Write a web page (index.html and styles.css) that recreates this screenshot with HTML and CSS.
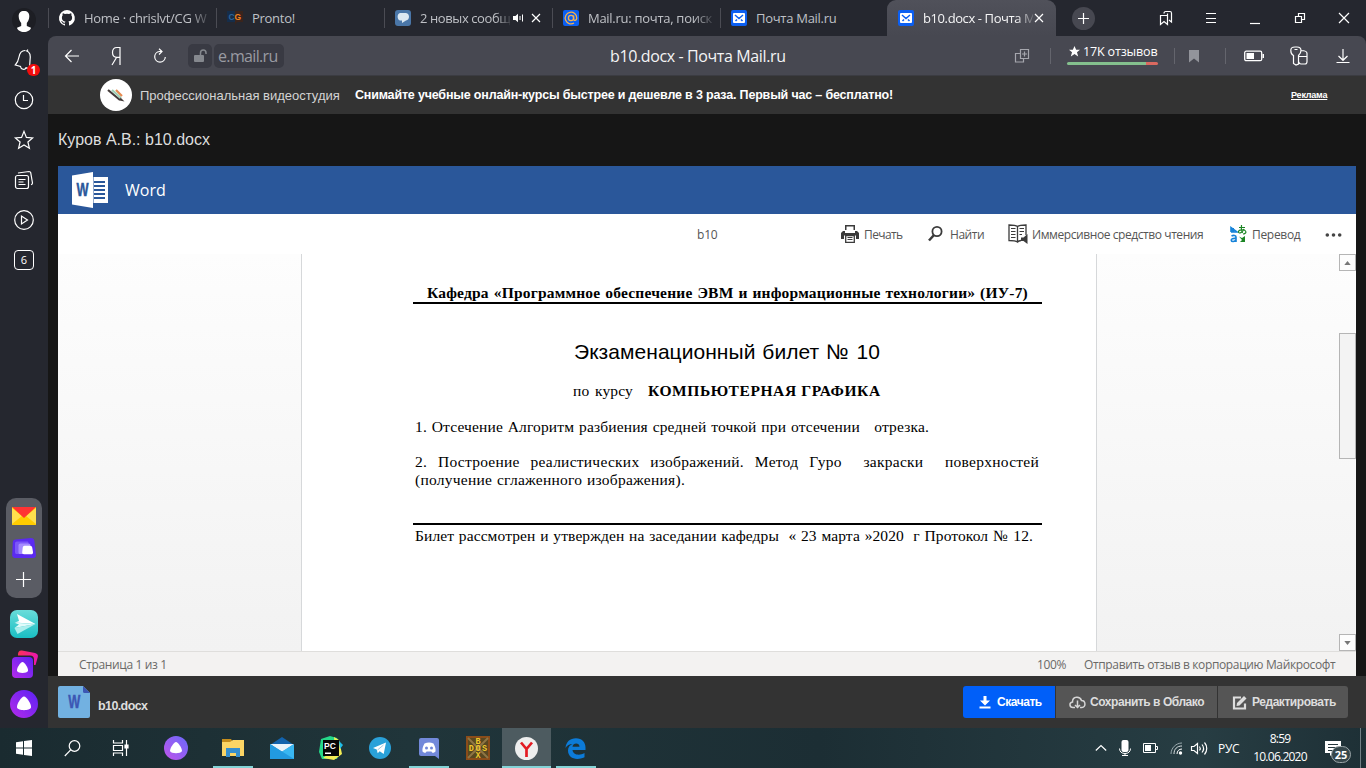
FILE: index.html
```html
<!DOCTYPE html>
<html lang="ru">
<head>
<meta charset="utf-8">
<title>b10.docx - Почта Mail.ru</title>
<link rel="stylesheet" href="styles.css">
</head>
<body>
<div class="browser">
  <aside class="sidebar">
    <div class="side-item"><svg width="24" height="24" viewBox="0 0 24 24"><circle cx="12" cy="12" r="12" fill="#1d1e24"/><path d="M12 3c3.500 0 5.500 2 5.300 5.500-.1 3-1.300 5-2.500 6.500v3l4.200 1.800C18.500 22.500 15.500 24 12 24s-6.500-1.500-7-4.200L9.200 18v-3C8 13.500 6.800 11.500 6.700 8.500 6.500 5 8.500 3 12 3z" fill="#fff"/></svg></div>
    <div class="side-item"><svg class="line" width="20" height="22" viewBox="0 0 20 22"><path d="M11.500 1.500C7 1.200 5.600 4.500 5 8c-.6 3.500-1.300 5.500-3.700 8l5.200 1.500c.3 3 4.500 4 5.500 1.300l4.500 1c-1.200-3.300-1-5.300-.5-8.300C16.600 7.500 16.500 3 12.700 2L14 .6"/></svg><b class="badge">1</b></div>
    <div class="side-item"><svg class="line" width="20" height="20" viewBox="0 0 20 20"><circle cx="10" cy="10" r="8.700"/><path d="M9.500 5v5.500H14"/></svg></div>
    <div class="side-item"><svg class="line" width="20" height="20" viewBox="0 0 20 20"><path d="M10 1.400l2.400 6 6.200.5-4.700 4.100 1.500 6.300L10 14.900l-5.400 3.400 1.500-6.300L1.400 7.900l6.200-.5z"/></svg></div>
    <div class="side-item"><svg class="line" width="20" height="20" viewBox="0 0 20 20"><rect x="1.500" y="5.500" width="13" height="13" rx="2"/><path d="M4.500 9.500h7M4.500 12h5M4.500 14.500h7M4 3l11-1.500c1 0 1.600.3 1.700 1.200L18.500 13c0 1-.5 1.500-1.500 1.800"/></svg></div>
    <div class="side-item"><svg class="line" width="20" height="20" viewBox="0 0 20 20"><circle cx="10" cy="10" r="9.300"/><path d="M7.500 6v8l6-4z"/></svg></div>
    <div class="side-item"><span class="tab-count">6</span></div>
    <div class="side-group">
      <svg width="24" height="18" viewBox="0 0 24 18"><path fill="#ffcc00" d="M0 0h24v18H0z"/><path fill="#ffe04d" d="M0 1l10 8L0 17zM24 1L14 9l10 8z"/><path fill="#ff3333" d="M0 0h24L12 11z"/></svg>
      <svg width="24" height="20" viewBox="0 0 24 20"><path fill="#5b2bf0" d="M3.500 1.500L19 0c2 0 3 1 3.300 2.500L24 17c0 2-1 3-3 3H4c-2 0-3.500-.5-3.800-2.500L.8 4c.2-1.500 1-2.300 2.700-2.500z"/><path fill="#7b57f8" d="M5 3.500h10c1 0 1.500.5 1.500 1.500v11H5c-1.500 0-2-.5-2-2V5.500c0-1.200.8-2 2-2z"/><path fill="#a58cff" d="M8.500 5.500h8c1.200 0 2 .7 2 2V16H8c-1.200 0-1.500-.5-1.500-2V7.500c0-1.200.8-2 2-2z"/><path fill="#fff" d="M12.500 7.800h5.500c1.300 0 2 .7 2.200 1.700l.8 4.500c.2 1.500-.5 2.300-2 2.300h-7c-1.300 0-2-.8-1.800-2l.5-4.500c.2-1.300.8-2 1.800-2z"/></svg>
      <svg class="line" width="16" height="16" viewBox="0 0 16 16"><path d="M7.500 1v15M0 8.500h15"/></svg>
    </div>
    <div class="side-apps">
      <svg width="28" height="28" viewBox="0 0 28 28"><defs><linearGradient id="teal" x2="0" y2="1"><stop stop-color="#69ddda"/><stop offset="1" stop-color="#19bec3"/></linearGradient></defs><rect width="28" height="28" rx="7" fill="url(#teal)"/><path fill="#fff" d="M7 4l18.500 10L5 12.500 9 11z"/><path fill="#e0fbfa" d="M25.500 14L4.500 12.700 9 14.500 4.500 18z"/><path fill="#aeeeed" d="M25.500 14L4.500 18l3 6z"/></svg>
      <svg width="28" height="28" viewBox="0 0 28 28"><defs><linearGradient id="pur" x1="1" x2="0" y2="1"><stop stop-color="#5a22f5"/><stop offset="1" stop-color="#b52be9"/></linearGradient><linearGradient id="pink"><stop stop-color="#fb3158"/><stop offset="1" stop-color="#ea16b0"/></linearGradient></defs><path d="M8 4c.3-2.500 1.500-4 4-3.500L25 3c2.500.7 3.300 2 2.800 4L25.500 15H20V7H8z" fill="url(#pink)"/><rect x="0" y="5.500" width="24" height="22.500" rx="4" fill="#25272f"/><rect x="2" y="7" width="21" height="21" rx="4" fill="url(#pur)"/><path fill="#fff" d="M12.500 12c2 0 6 6 5.500 9-1 2.500-10 2.500-11 0-.5-3 3.500-9 5.500-9z"/></svg>
      <svg width="28" height="28" viewBox="0 0 28 28"><circle cx="14" cy="14" r="14" fill="url(#pur)"/><path fill="#fff" d="M14 6.500c2.500 0 7.500 7.500 7 11-1 3.500-13 3.500-14 0-.5-3.500 4.500-11 7-11z"/></svg>
    </div>
  </aside>

  <div class="main">
    <nav class="tabs">
      <div class="tab">
        <svg class="fav" viewBox="0 0 16 16"><path fill="#fff" d="M8 0a8 8 0 0 0-2.500 15.600c.4.100.5-.2.500-.4v-1.500c-2.200.5-2.700-1-2.700-1-.4-.9-.9-1.200-.9-1.200-.7-.5.1-.5.100-.5.800.1 1.200.8 1.200.8.700 1.300 1.900.9 2.300.7.100-.5.300-.9.500-1.100-1.800-.2-3.600-.9-3.600-4 0-.9.300-1.600.8-2.100-.1-.2-.4-1 .1-2.100 0 0 .7-.2 2.200.8a7.500 7.500 0 0 1 4 0c1.500-1 2.200-.8 2.200-.8.400 1.100.2 1.900.1 2.100.5.600.8 1.300.8 2.100 0 3.100-1.900 3.700-3.700 4 .3.200.6.700.6 1.500v2.200c0 .2.100.5.600.4A8 8 0 0 0 8 0z"/></svg>
        <span class="tab-title t1">Home · chrislvt/CG W</span>
      </div>
      <div class="tab">
        <svg class="fav" viewBox="0 0 16 16"><path fill="#152d4a" d="M0 1h8v11H0z"/><path fill="#3a241c" d="M8 1h8v11H10l-2 3z"/><text x="1.500" y="10" class="cg" fill="#2d649b">C</text><text x="7.500" y="10" class="cg" fill="#f18323">G</text></svg>
        <span class="tab-title t2">Pronto!</span>
      </div>
      <div class="tab">
        <svg class="fav" viewBox="0 0 16 16"><rect width="16" height="16" rx="3" fill="#4a76a8"/><path fill="#dce8f2" d="M5 3h6c4 .5 4 7 0 7.500L7 13v-2.500H5C1.700 9.500 2 3.500 5 3z"/></svg>
        <span class="tab-title t3">2 новых сообщ</span>
        <svg class="sound" viewBox="0 0 10 10"><path fill="#fff" d="M0 3h2.500L5 .8v8.400L2.500 7H0z"/><path stroke="#fff" d="M7 3v4M9.500 1.500v7"/></svg>
        <svg class="line tab-x" viewBox="0 0 10 10"><path d="M1 1l8 8M9 1L1 9"/></svg>
      </div>
      <div class="tab">
        <svg class="fav" viewBox="0 0 16 16"><rect width="16" height="16" rx="2" fill="#0b5ff2"/><g fill="none" stroke="#f8b24b" stroke-width="1.300"><circle cx="8" cy="8" r="2.600"/><path d="M10.600 5.400v3.800c.2 1.800 3.200 1.500 3.200-1.200A5.800 5.800 0 1 0 11 13"/></g></svg>
        <span class="tab-title t4">Mail.ru: почта, поиск</span>
      </div>
      <div class="tab">
        <svg class="fav" viewBox="0 0 16 16"><rect width="16" height="16" rx="2" fill="#0b5ff2"/><rect x="2" y="3" width="12" height="10" rx="1" fill="#fff"/><path d="M4 5l4 3.500L12 5M4.500 11L6 9.500M11.500 11L10 9.500" stroke="#0b5ff2" stroke-width="1.500" fill="none"/></svg>
        <span class="tab-title t5">Почта Mail.ru</span>
      </div>
      <div class="tab active">
        <svg class="fav" viewBox="0 0 16 16"><rect width="16" height="16" rx="2" fill="#0b5ff2"/><rect x="2" y="3" width="12" height="10" rx="1" fill="#fff"/><path d="M4 5l4 3.500L12 5M4.500 11L6 9.500M11.500 11L10 9.500" stroke="#0b5ff2" stroke-width="1.500" fill="none"/></svg>
        <span class="tab-title t6">b10.docx - Почта М</span>
        <svg class="line tab-x" viewBox="0 0 10 10"><path d="M1 1l8 8M9 1L1 9"/></svg>
      </div>
      <span class="new-tab"><svg class="line" width="11" height="11" viewBox="0 0 11 11"><path d="M5.500 0v11M0 5.500h11"/></svg></span>
      <div class="win">
        <svg class="line" viewBox="0 0 16 16"><path d="M2.500 5.500h7v9L6 11.500l-3.500 3zM6 3.500c0-1.200.5-2 1.800-2H12c1.200 0 1.500.7 1.500 1.800V12L11 10M9.500 3.500v2"/></svg>
        <svg class="line" viewBox="0 0 16 16"><path d="M3 3.500h10M3 8.500h10M3 12.500h10"/></svg>
        <svg class="line" viewBox="0 0 16 16"><path d="M3 13.500h10"/></svg>
        <svg class="line" viewBox="0 0 16 16"><path d="M3.500 6.500h6v6h-6zM6.500 6V3.500h6v6H10"/></svg>
        <svg class="line" viewBox="0 0 16 16"><path d="M3 3l10 10M13 3L3 13"/></svg>
      </div>
    </nav>

    <div class="toolbar">
      <div class="nav-left">
        <svg class="line" width="16" height="16" viewBox="0 0 16 16"><path d="M7.500 2L1.500 8l6 6M1.500 8H15"/></svg>
        <svg class="line ya" width="12" height="20" viewBox="0 0 12 20"><path d="M10 19V1.500H7C3.800 1.500 2.500 3.500 2.500 6.500s1.500 4.800 4.500 4.800h3M6.500 11.500L2 19"/></svg>
        <svg class="line" width="14" height="16" viewBox="0 0 14 16"><path d="M8.500 3.500H6.500A5.300 5.300 0 1 0 12.300 9M6 .8l3 2.700-3 3"/></svg>
      </div>
      <span class="lock"><svg width="16" height="16" viewBox="0 0 16 16"><rect x="2" y="7" width="10" height="7" rx="1" fill="#85888e"/><path d="M8.500 7V5c0-4 5.500-4 5.500 0v1" fill="none" stroke="#85888e" stroke-width="1.500"/></svg></span>
      <span class="host">e.mail.ru</span>
      <span class="page-title">b10.docx - Почта Mail.ru</span>
      <div class="nav-right">
        <svg class="line dim i-dup" width="16" height="16" viewBox="0 0 16 16"><path d="M6.500 1.500h8v9h-8zM6 5.500H1.500v8.500h8V11M10.500 3.500v5M8 6h5"/></svg>
        <i class="sep"></i>
        <div class="reviews"><span><svg width="11" height="11" viewBox="0 0 12 12"><path fill="#fff" d="M6 0l1.800 4H12L8.700 6.800 10 11.500 6 8.800l-4 2.700 1.300-4.700L0 4h4.200z"/></svg><em>17K отзывов</em></span><i class="rating"></i></div>
        <i class="sep"></i>
        <svg class="i-mark" width="10" height="14" viewBox="0 0 10 14"><path fill="#92949b" d="M0 1h10v12.500L5 9.500l-5 4z"/></svg>
        <i class="sep"></i>
        <svg class="i-bat" width="20" height="12" viewBox="0 0 20 12"><rect x=".7" y="1.200" width="17" height="9.500" rx="1.500" fill="none" stroke="#fff" stroke-width="1.300"/><path fill="#fff" d="M2.500 3h7.500v6H2.500zM18.500 4H20v4h-1.500z"/></svg>
        <svg class="line i-key" width="19" height="20" viewBox="0 0 19 20"><path d="M3.500 9.500C1 8.500.8 6 .8 4.500.8 1.500 2.500 1 5 1h2c2.500 0 4 1 4 3.500S9.500 8.500 8.500 9.500V18L6 19l-2.500-1.500zM4.500 3.500h3M11 4.500c3 0 6 0 6 3v8c0 1.500-.5 2.500-2 2.500h-4c-1.500 0-2-1-2.300-2M9 10.500h8"/></svg>
        <svg class="line i-dl" width="14" height="16" viewBox="0 0 14 16"><path d="M7 1v11M2.500 8L7 12.300 11.500 8M.5 14.500h13"/></svg>
      </div>
    </div>

    <div class="ad">
      <svg width="32" height="32" viewBox="0 0 32 32"><circle cx="16" cy="16" r="16" fill="#fff"/><g stroke-width="2.200"><path stroke="#443b39" d="M8 11l12 10"/><path stroke="#9fd0b6" d="M12 11l9 8"/><path stroke="#e68a51" d="M16 11l6 6"/></g><path fill="#443b39" d="M20.500 18.500l4 4-5-1z"/></svg>
      <span class="ad-brand">Профессиональная видеостудия</span>
      <b class="ad-text">Снимайте учебные онлайн-курсы быстрее и дешевле в 3 раза. Первый час – бесплатно!</b>
      <span class="ad-mark">Реклама</span>
    </div>

    <div class="heading"><span>Куров А.В.: b10.docx</span></div>

    <section class="viewer">
      <header class="word-bar">
        <svg width="36" height="36" viewBox="0 0 36 36"><path fill="#fff" d="M0 3.500L21 0v36L0 32.500zM21.500 5H36v26H21.500z"/><path stroke="#2a579a" stroke-width="2" d="M22 10h11M22 14h11M22 18h11M22 22h11M22 26h11"/><text class="w-mark" transform="translate(10.500 24) scale(.8 1.100)" fill="#2a579a" stroke="#2a579a">W</text></svg>
        <span>Word</span>
      </header>
      <div class="commands">
        <span class="doc-name">b10</span>
        <div class="cmd c-print"><svg width="18" height="18" viewBox="0 0 18 18"><path fill="#3b3b3b" d="M4 0h10v5h-1.500V1.500h-7V5H4zM2 6h2v2h10V6h2l2 2v6h-3v-3.500H3V14H0V8z"/><path fill="none" stroke="#3b3b3b" stroke-width="1.300" d="M4.700 10.500h8.600v6.800H4.700z"/><path stroke="#3b3b3b" d="M6.500 12.500h5M6.500 14.500h5"/></svg><span>Печать</span></div>
        <div class="cmd c-find"><svg width="15" height="16" viewBox="0 0 15 16"><circle cx="9" cy="5.500" r="4.600" fill="none" stroke="#3b3b3b" stroke-width="1.800"/><path d="M6 9L1 14.500" stroke="#3b3b3b" stroke-width="2.500"/></svg><span>Найти</span></div>
        <div class="cmd c-read"><svg width="20" height="20" viewBox="0 0 20 20"><path fill="none" stroke="#3b3b3b" stroke-width="1.300" d="M9.500 2.500C7.500 1 4 1 1 1v15.500c3 0 6.500 0 8.500 1.500V2.500C11.500 1 14 1 18 1v10M9.500 18c1-1 2-1.300 3.500-1.500"/><path stroke="#3b3b3b" d="M3 4.500h4.500M3 7.500h4.500M3 10.500h4.500M3 13.500h4.500M11.500 4.500H16M11.500 7.500H16M11.500 10.500H14"/><path fill="#3b3b3b" d="M13 13.500h2.500L19.500 10v10L15.500 17H13z"/></svg><span>Иммерсивное средство чтения</span></div>
        <div class="cmd c-trans"><svg width="17" height="18" viewBox="0 0 17 18"><path fill="none" stroke="#1683d9" stroke-width="1.600" d="M1 7V2.500l6 4.500H1M1.500 11c2-1 4.500-.7 4.500 1v5M6 13.500c-3-.3-5 .2-4.700 2 .3 1.600 3.600 1.300 4.700-.5"/><path fill="#1683d9" d="M1 3h3v4H1z"/><path fill="none" stroke="#1c8524" stroke-width="1.200" d="M9 2.500h6M11.500 0c-.5 3 0 6 1 8M14 4c-1 3-5 5.500-5.500 3S14 4 15.500 6 14 9 13 9"/><path fill="#1c8524" d="M9 11.500l3 1.500 3-2v6h-5l2-2z"/></svg><span>Перевод</span></div>
        <svg class="dots" width="17" height="5" viewBox="0 0 17 5"><g fill="#444"><circle cx="2.300" cy="3" r="1.800"/><circle cx="8.500" cy="3" r="1.800"/><circle cx="14.700" cy="3" r="1.800"/></g></svg>
      </div>

      <div class="canvas">
        <article class="page">
          <p class="dept">Кафедра «Программное обеспечение ЭВМ и информационные технологии» (ИУ-7)</p>
          <h1>Экзаменационный билет № 10</h1>
          <p class="course"><span>по курсу</span><b>КОМПЬЮТЕРНАЯ ГРАФИКА</b></p>
          <p class="q1">1. Отсечение Алгоритм разбиения средней точкой при отсечении &nbsp; отрезка.</p>
          <p class="q2">2. Построение реалистических изображений. Метод Гуро &nbsp;закраски &nbsp;поверхностей</p>
          <p class="q3">(получение сглаженного изображения).</p>
          <p class="approved">Билет рассмотрен и утвержден на заседании кафедры &nbsp;« 23 марта »2020 &nbsp;г Протокол № 12.</p>
        </article>
        <div class="scroll">
          <span class="sbtn"><svg width="7" height="4" viewBox="0 0 8 5"><path fill="#777" d="M4 0l4 5H0z"/></svg></span>
          <span class="thumb"></span>
          <span class="sbtn"><svg width="7" height="4" viewBox="0 0 8 5"><path fill="#777" d="M0 0h8L4 5z"/></svg></span>
        </div>
      </div>

      <footer class="status"><span class="pages">Страница 1 из 1</span><span class="zoom">100%</span><span class="feedback">Отправить отзыв в корпорацию Майкрософт</span></footer>
    </section>

    <div class="file-bar">
      <svg width="32" height="32" viewBox="0 0 32 32"><path fill="#72b1e1" d="M2 0h23l7 7v23a2 2 0 0 1-2 2H2a2 2 0 0 1-2-2V2a2 2 0 0 1 2-2z"/><path fill="#3c57b4" d="M25 0l7 7h-5.500A1.500 1.500 0 0 1 25 5.500z"/><text class="w-mark" transform="translate(16 22) scale(.8 1.100)" fill="#3c57b4" stroke="#3c57b4">W</text></svg>
      <b class="file-name">b10.docx</b>
      <div class="actions">
        <span class="act primary"><svg width="12" height="14" viewBox="0 0 12 14"><path fill="#fff" d="M4.500 1h3v4.500H11l-5 5L1 5.500h3.500zM.500 11.500h11V13.500H.5z"/></svg><b>Скачать</b></span>
        <span class="act save"><svg width="17" height="14" viewBox="0 0 17 14"><path fill="none" stroke="#d5d5d5" stroke-width="1.500" d="M6 12.500H4C.3 12.500-.2 7.500 3.500 7 3.500 1 11 1 12.500 5.500c4.500 0 4.500 7 .5 7h-2M8.500 5.500v7M6 10l2.500 2.500L11 10"/></svg><b>Сохранить в Облако</b></span>
        <span class="act edit"><svg width="15" height="15" viewBox="0 0 15 15"><path fill="none" stroke="#ddd" stroke-width="2.200" d="M9 2.500H2v11h11V8.500"/><path fill="#ddd" d="M5 8L12 1l2.500 2.500-7 7-3 .5z"/></svg><b>Редактировать</b></span>
      </div>
    </div>
  </div>
</div>

<div class="taskbar">
  <span class="tb"><svg width="16" height="16" viewBox="0 0 16 16"><path fill="#fff" d="M0 2.200l7-1v6.300H0zM8 1l8-1v7.500H8zM0 8.500h7v6.300l-7-1zM8 8.500h8V16l-8-1z"/></svg></span>
  <span class="tb"><svg class="line" width="17" height="17" viewBox="0 0 17 17"><circle cx="10.500" cy="6" r="5.300"/><path d="M6.700 9.800L.8 16"/></svg></span>
  <span class="tb"><svg class="line" width="17" height="16" viewBox="0 0 17 16"><path d="M1.500 0v3h9V0M1.500 16v-3h9v3M1.500 5.500h9v5h-9zM14.500 0v16"/><path fill="#fff" d="M13 5h3v3h-3z"/></svg></span>
  <span class="tb wide"><svg width="24" height="24" viewBox="0 0 24 24"><defs><linearGradient id="al" x1="1" x2="0" y2="1"><stop stop-color="#6869fb"/><stop offset="1" stop-color="#c154ea"/></linearGradient></defs><circle cx="12" cy="12" r="12" fill="url(#al)"/><path fill="#fff" d="M12 6c2 0 6 6 6 9-1 3-11 3-12 0 0-3 4-9 6-9z"/></svg></span>
  <span class="tb app run"><svg width="22" height="20" viewBox="0 0 22 20"><path fill="#c58d1c" d="M0 1h9l2 3v4H0z"/><path fill="#fbd565" d="M0 4h8l3-2h11v16H0z"/><path fill="#368fce" d="M4 19v-9h14v9h-4v-4H8v4z"/></svg></span>
  <span class="tb app"><svg width="24" height="22" viewBox="0 0 24 22"><path fill="#1263ad" d="M0 8l12-8 12 8v5H0z"/><path fill="#e8f3fb" d="M0 7h24L12 15z"/><path fill="#39b7f2" d="M0 7l12 8L0 22zM24 7v15H0z"/><path fill="#229ae0" d="M0 7l24 15H0z"/></svg></span>
  <span class="tb app"><svg width="24" height="24" viewBox="0 0 24 24"><path fill="#25d889" d="M2 3l9-3 7 2 4 7-4 14H3L0 16z"/><path fill="#f3ed55" d="M15 1l5 3 3 14-8 6-11-2 12-9z"/><path fill="#20bde6" d="M20 5l4 4-3 4z"/><path fill="#060606" d="M4 4h16v16H4z"/><text class="pc" x="5" y="12.500">PC</text><path fill="#fff" d="M6 16.500h6V18H6z"/></svg></span>
  <span class="tb app"><svg width="22" height="22" viewBox="0 0 22 22"><circle cx="11" cy="11" r="11" fill="#2aa1d9"/><path fill="#fff" d="M4 11l13-5.500-2.300 11.500-4-2.800-2 2-1-3.700z"/><path stroke="#a7cbe0" d="M8.500 13l6-5"/></svg></span>
  <span class="tb app run"><svg width="20" height="21" viewBox="0 0 20 21"><path fill="#7289da" d="M2 0h16a2 2 0 0 1 2 2v19l-4-3H2a2 2 0 0 1-2-2V2a2 2 0 0 1 2-2z"/><path fill="#fff" d="M5.500 5.500Q10 3.500 14.500 5.500C16.500 9 16.800 11 16.500 13.500 14.500 15.500 13 15 12.500 13.500h-5C7 15 5.500 15.500 3.500 13.500 3.200 11 3.500 9 5.500 5.500z"/><g fill="#7289da"><circle cx="7.500" cy="10" r="1.500"/><circle cx="12.500" cy="10" r="1.500"/></g></svg></span>
  <span class="tb app"><svg width="24" height="24" viewBox="0 0 24 24"><path fill="#8b4c19" d="M0 0h24v24H0z"/><path fill="#594821" d="M2 2h20v20H2z"/><path stroke="#8f7544" stroke-width="2" d="M2 2l20 20M22 2L2 22"/><g class="dos"><text x="12.700" y="7.500">B</text><text x="12.700" y="14.500">DOS</text><text x="12.700" y="21.500">X</text></g></svg></span>
  <span class="tb app run cur"><svg width="23" height="23" viewBox="0 0 23 23"><circle cx="11.500" cy="11.500" r="11.500" fill="#eee"/><path fill="none" stroke="#e31b23" stroke-width="2.700" d="M6 5.500l5.500 6.500L17 5.500M11.500 12v8"/></svg></span>
  <span class="tb app run"><svg width="21" height="21" viewBox="0 0 21 21"><path fill="#0c7bd8" d="M.5 10C1 4 5 .3 11 .3c6 0 9.500 4.200 9.500 9.200V12H7.500c.5 5 7 6 12 3v4.300C11 23 3 20 3 12.500 3 9 5 7 7.500 6 4.500 6 2 7.500.5 10zM7.500 8.800h7C14.500 4.500 8 4.500 7.500 8.800z"/></svg></span>
  <div class="tray">
    <svg class="line" width="12" height="8" viewBox="0 0 12 8"><path d="M.8 6.500L6 1.500l5.200 5"/></svg>
    <svg width="12" height="16" viewBox="0 0 12 16"><rect x="2.500" width="7" height="12" rx="2" fill="#fff"/><path fill="none" stroke="#fff" d="M.5 8.500c0 3 2 5 5.500 5s5.500-2 5.500-5M6 13v2.500M3 15.500h6"/></svg>
    <svg width="15" height="10" viewBox="0 0 15 10"><path fill="none" stroke="#fff" d="M.5.5h12v9H.5zM13 3.500h1.500v3H13"/><path fill="#fff" d="M2 2h6v6H2z"/></svg>
    <svg class="wifi" width="13" height="13" viewBox="0 0 13 13"><g fill="none" stroke="#9cabb0"><path d="M1 12C1 6 6 1 12 1"/><path d="M4 12c0-5 3-8 8-8" stroke="#dce2e4"/><path d="M7 12c0-3 2-5 5-5" stroke="#fff"/></g><circle cx="10.500" cy="11" r="1.700" fill="#fff"/></svg>
    <svg class="line" width="17" height="13" viewBox="0 0 17 13"><path d="M.5 4.500H3l3.500-3v10L3 8.500H.5zM8.500 4.500c1 1.300 1 2.700 0 4M11 2.500c2 2.500 2 5.500 0 8M13.500.5c3 3.500 3 8.500 0 12"/></svg>
    <span class="lang">РУС</span>
    <div class="clock"><span class="time">8:59</span><span class="date">10.06.2020</span></div>
    <div class="notes"><svg width="16" height="15" viewBox="0 0 16 15"><path fill="#fff" d="M0 0h16v12H8l-3 3v-3H0z"/><path stroke="#26373d" d="M3 3.500h10M3 6.500h10M3 9.500h6"/></svg><b>25</b></div>
    <i class="show"></i>
  </div>
</div>
</body>
</html>
```

FILE: styles.css
```css
* { box-sizing: border-box; }
body { margin: 0; width: 1366px; height: 768px; overflow: hidden; background: #161616; font-family: "Open Sans", "Noto Sans", sans-serif; }
svg { display: block; flex: none; overflow: visible; }
span, b, em, p, h1 { white-space: nowrap; }
p, h1 { margin: 0; }
.line { fill: none; stroke: #fff; stroke-width: 1.2; }
.browser { display: flex; height: 728px; background: #25272f; }

/* sidebar */
.sidebar { width: 48px; display: flex; flex-direction: column; align-items: center; }
.side-item { position: relative; width: 48px; height: 40px; display: flex; align-items: center; justify-content: center; }
.badge { position: absolute; left: 27px; top: 24px; width: 13px; height: 12px; border-radius: 6px; background: #f20d0d; color: #fff; font-size: 10px; line-height: 12px; text-align: center; }
.tab-count { width: 20px; height: 20px; border: 1.3px solid #fff; border-radius: 4px; color: #fff; font-size: 11px; line-height: 18px; text-align: center; }
.side-group { width: 36px; height: 100px; margin-top: 218px; padding-top: 9px; border-radius: 10px; background: #5a5c64; display: flex; flex-direction: column; align-items: center; gap: 13px; }
.side-apps { margin-top: 12px; display: flex; flex-direction: column; gap: 12px; }

/* tabs */
.main { flex: 1; display: flex; flex-direction: column; min-width: 0; background: #161616; }
.tabs { position: relative; z-index: 1; height: 36px; display: flex; align-items: center; background: #25272f; }
.tab { width: 168px; height: 36px; padding-left: 10px; display: flex; align-items: center; color: #bfc1c6; }
.tab::before { content: ""; width: 1px; height: 20px; margin-left: -10px; margin-right: 10px; background: #4b4c54; }
.fav { width: 16px; height: 16px; margin-right: 9px; }
.tab-title { width: 124px; overflow: hidden; font-size: 13px; line-height: 20px; letter-spacing: -.28px; }
.t1, .t3, .t4, .t6 { -webkit-mask-image: linear-gradient(to right, #000 85%, rgba(0,0,0,.2)); mask-image: linear-gradient(to right, #000 85%, rgba(0,0,0,.2)); }
.t3 { width: 90px; margin-right: 3px; letter-spacing: -.4px; }
.t6 { width: 110px; margin-right: 1px; color: #f4f4f5; letter-spacing: -.4px; }
.sound { width: 10px; height: 10px; margin-right: 8px; }
.tab-x { width: 10px; height: 10px; }
.active { width: 169px; margin-left: -1px; background: linear-gradient(#50515a, #474851); border-radius: 9px 9px 0 0; }
.active::before { background: none; }
.new-tab { width: 23px; height: 23px; margin-left: 16px; border-radius: 50%; background: #474851; display: flex; align-items: center; justify-content: center; }
.win { margin-left: 63px; display: flex; gap: 28.5px; }
.win svg { width: 16px; height: 16px; }
.cg { font: bold 8.5px "Liberation Sans", sans-serif; }

/* address bar */
.toolbar { height: 40px; display: flex; align-items: center; background: #474851; border-bottom: 1px solid #3b3c42; border-radius: 8px 8px 0 0; box-shadow: 0 -8px 0 0 #25272f; }
.nav-left { width: 140px; padding-left: 16px; display: flex; align-items: center; }
.nav-left .ya { margin: 0 31px 0 30px; }
.lock, .host { height: 24px; border-radius: 5px; background: #393a43; display: flex; align-items: center; }
.lock { width: 24px; justify-content: center; margin-right: 2px; }
.host { width: 70px; padding-left: 4px; color: #999ba2; font-size: 16px; letter-spacing: -.65px; }
.page-title { width: 190px; margin-left: 326px; padding-top: 1px; color: #f4f4f5; font-size: 16px; letter-spacing: -.38px; }
.nav-right { flex: 1; padding-left: 213.500px; display: flex; align-items: center; }
.dim { stroke: #a5a6ad; }
.sep { width: 1px; height: 16px; background: #64656d; }
.i-dup { margin-right: 20px; }
.reviews { width: 91px; height: 22px; margin: 0 15.500px 0 16.500px; }
.reviews span { display: flex; height: 14px; align-items: center; color: #fff; padding-left: 2px; gap: 3px; margin-top: 0; }
.reviews em { font-style: normal; font-size: 12.5px; letter-spacing: -.15px; }
.rating { display: block; height: 3px; margin-top: 3px; border-radius: 2px; background: linear-gradient(to right, #84c08e 87%, #da6960 87%); }
.i-mark { margin: 0 26px 0 14px; }
.i-bat { margin: 0 26px 0 18px; }
.i-dl { margin-left: 27px; }

/* ad and heading */
.ad { height: 38px; padding-left: 52px; display: flex; align-items: center; background: #333; color: #fff; font-family: "Liberation Sans", Arial, sans-serif; font-size: 13px; }
.ad-brand { width: 223px; padding-left: 8px; color: #d4d4d4; letter-spacing: 0; }
.ad-text { width: 936px; font-size: 12.5px; letter-spacing: -.18px; }
.ad-mark { font-size: 9px; font-weight: bold; text-decoration: underline; letter-spacing: -.2px; }
.heading { height: 52px; padding-left: 10px; display: flex; align-items: center; color: #ddd; font: 16px "Liberation Sans", Arial, sans-serif; }

/* document viewer */
.viewer { width: 1298px; height: 510px; margin-left: 10px; background: #fff; }
.word-bar { height: 48px; padding-left: 14px; display: flex; align-items: center; gap: 17px; background: #2a579a; color: #fff; font-size: 16px; }
.w-mark { font: bold 16px "Liberation Sans", Arial, sans-serif; text-anchor: middle; stroke-width: .4; }
.commands { height: 40px; padding-left: 639px; display: flex; align-items: center; color: #555; font-size: 12px; letter-spacing: -.42px; }
.doc-name { width: 144px; letter-spacing: -.2px; }
.cmd { display: flex; align-items: center; gap: 5px; }
.c-print { width: 87px; letter-spacing: -.6px; }
.c-find { width: 80px; gap: 7px; letter-spacing: -.45px; }
.c-read { width: 222px; gap: 4px; }
.c-trans { width: 95px; letter-spacing: -.3px; }
.canvas { height: 397px; display: flex; justify-content: space-between; padding-left: 243px; background: linear-gradient(#fdfdfd, #f2f2f2); }
.page { width: 796px; padding: 29px 54px 0 111px; background: #fff; border: solid #d6d8da; border-width: 0 1px; color: #000; font: 15.500px/18px "Liberation Serif", "Times New Roman", serif; }
.page p, .page h1 { text-align: justify; text-align-last: justify; }
.dept { height: 21px; padding: 1px 14px 0; border-bottom: 2px solid #000; font-weight: bold; letter-spacing: .2px; }
.page h1 { width: 306px; margin: 36px 0 0 161px; font: 21px/24px "Liberation Sans", Arial, sans-serif; letter-spacing: .05px; }
.page .course { margin: 18px 0 0 160px; display: flex; }
.course span { width: 60px; margin-right: 15px; letter-spacing: .15px; }
.course b { width: 232px; letter-spacing: .6px; }
.q1, .q2, .q3 { margin-left: 2px; }
.q1 { width: 514px; margin-top: 18px; letter-spacing: .15px; }
.q2 { width: 624px; margin-top: 17px; letter-spacing: .25px; }
.q3 { width: 270px; letter-spacing: .25px; }
.approved { margin-top: 34px; padding: 2px 9px 0 2px; border-top: 2px solid #000; letter-spacing: .1px; }
.scroll { width: 17px; display: flex; flex-direction: column; }
.sbtn { height: 17px; border: 1px solid #b5b5b5; background: #fdfdfd; display: flex; align-items: center; justify-content: center; }
.thumb { height: 126px; margin: 62px 0 175px; border: 1px solid #b5b5b5; background: #f3f3f3; }
.status { height: 25px; padding-left: 21px; display: flex; align-items: center; background: #f3f2f1; border-top: 1px solid #dfdedc; color: #6a6967; font-size: 12px; letter-spacing: -.36px; }
.pages { width: 958px; }
.zoom { width: 47px; }

/* file bar */
.file-bar { height: 52px; padding: 0 18px 0 10px; display: flex; align-items: center; background: #333; font-family: "Liberation Sans", Arial, sans-serif; color: #ddd; font-size: 12px; letter-spacing: -.45px; }
.file-name { margin: 7px 0 0 8px; font-size: 12.5px; letter-spacing: -.6px; }
.actions { margin-left: auto; height: 32px; display: flex; gap: 1px; }
.act { display: flex; align-items: center; background: #555; color: #ddd; gap: 6px; padding-left: 13px; }
.primary { width: 92px; background: #005ff9; color: #fff; border-radius: 3px 0 0 3px; padding-left: 16px; }
.save { width: 161px; gap: 4px; }
.edit { width: 130px; border-radius: 0 3px 3px 0; padding-left: 14px; gap: 5px; }

/* taskbar */
.taskbar { height: 40px; display: flex; background: linear-gradient(90deg, #1a2b30, #20353a 30%, #1c2e34 60%, #273d43 88%, #1e3036); color: #fff; }
.tb { width: 48px; height: 40px; display: flex; align-items: center; justify-content: center; position: relative; }
.wide { width: 64px; }
.app { width: 49px; }
.run::after { content: ""; position: absolute; bottom: 0; width: 40px; height: 2px; background: #83d3d6; }
.cur { background: #4d5b60; }
.cur::after { width: 49px; }
.pc { font: bold 8.5px "Liberation Sans", Arial, sans-serif; fill: #fff; }
.dos { font: bold 8.5px "Liberation Mono", monospace; fill: #efc72c; text-anchor: middle; letter-spacing: 1.5px; }
.tray { flex: 1; display: flex; align-items: center; justify-content: flex-end; font-size: 12px; }
.tray > svg { margin-right: 12px; }
.tray > .wifi { margin-right: 8px; }
.lang { width: 30px; margin-left: -2px; letter-spacing: -.3px; }
.clock { width: 64px; display: flex; flex-direction: column; align-items: center; line-height: 18px; letter-spacing: -.75px; }
.notes { position: relative; width: 35px; margin-left: 13px; }
.notes b { position: absolute; left: 6px; top: 5px; width: 20px; height: 17px; border: 1px solid #9aa5a8; border-radius: 9px; background: #35464b; font-size: 11px; line-height: 15px; text-align: center; }
.show { width: 1px; height: 40px; margin-right: 5px; background: #718085; }
```
